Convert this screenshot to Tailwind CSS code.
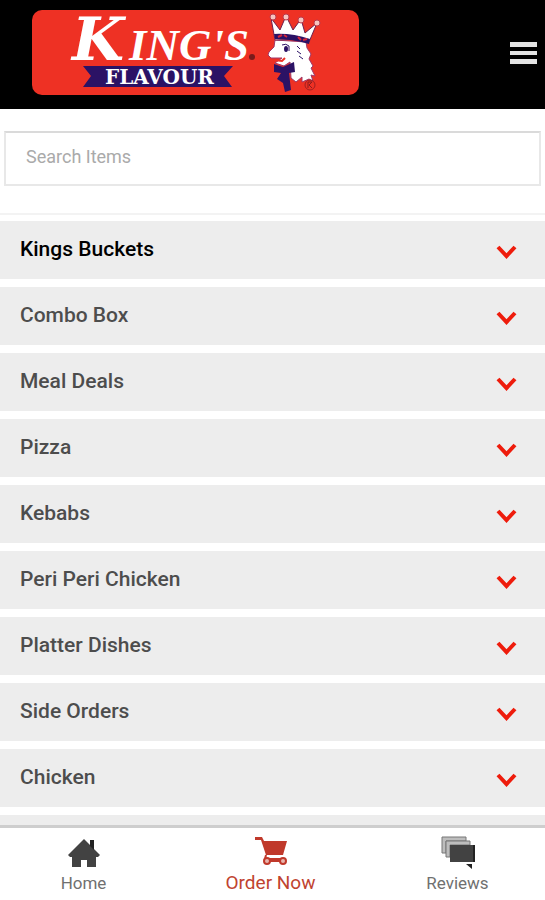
<!DOCTYPE html>
<html lang="en">
<head>
  <meta charset="UTF-8" />
  <meta name="viewport" content="width=device-width, initial-scale=1.0"/>
  <title>King's Flavour - Order Now</title>
  <script src="https://cdn.jsdelivr.net/npm/@tailwindcss/browser@4"></script>
</head>
<body class="flex flex-col h-screen overflow-hidden bg-white font-['Roboto',sans-serif]">
  <!-- Header -->
  <header class="shrink-0 flex justify-between items-start bg-black pt-[10px] pb-[14px] pl-8 pr-2">
    <a href="#" aria-label="King's Flavour">
      <svg class="w-[327px] h-[85px]" viewBox="0 0 327 85">
        <rect width="327" height="85" rx="10" fill="#ee3124" />
        <!-- Name -->
        <g fill="#fff" font-weight="bold" font-style="italic">
          <text x="40" y="50" font-size="60" font-family="DejaVu Serif, serif">K</text>
          <text x="97" y="50" font-size="45" font-family="Liberation Serif, serif">ING'S</text>
        </g>
        <circle cx="220" cy="47" r="3" fill="#7a1b1b" />
        <!-- Ribbon -->
        <path d="M51 56H201L192 66L200 77H51L59 66Z" fill="#2b1265" />
        <text x="73" y="74" font-size="20" fill="#fff" font-family="DejaVu Serif, serif" font-weight="bold">FLAVOUR</text>
        <!-- Rooster -->
        <path d="M243 30L242 37L237 42L236 45L239 48L250 48L243 53L252 56L258 52L259 68L264 72L270 67L270 72L277 69L281 71L279 65L283 66L279 58L281 56L277 49L279 44L275 38L274 32Z" fill="#fff" stroke="#a03a6a" stroke-width="1" />
        <path d="M243 30L239 8L248 20L254 6L261 20L269 9L273 23L285 13L277 32Q260 28 243 30Z" fill="#fff" stroke="#6d2150" stroke-width="1" />
        <g fill="#f6c4c0" stroke="#b83a4c" stroke-width="1">
          <circle cx="241" cy="7" r="3" />
          <circle cx="254" cy="7" r="3" />
          <circle cx="269" cy="10" r="3" />
          <circle cx="285" cy="13" r="3" />
        </g>
        <path d="M242 24Q260 23 278 29L277 34Q260 29 243 29Z" fill="#2b1265" />
        <path d="M246 27L250 25M252 25L255 27M266 27L269 30M271 30L275 29" stroke="#d5283c" stroke-width="2" />
        <ellipse cx="254" cy="39" rx="2" ry="3" fill="#2b1265" />
        <path d="M250 35Q254 33 257 36V41M265 36L268 39M265 41L269 44M267 46L271 49" fill="none" stroke="#2b1265" stroke-width="1" />
        <path d="M242 50L250 51L253 48" fill="none" stroke="#ee3124" stroke-width="2" />
        <path d="M242 54L251 57L262 52L263 62L257 63L259 80L253 82L251 73L245 69L249 63L242 62Z" fill="#2b1265" />
        <circle cx="278" cy="75" r="5" fill="none" stroke="#a02020" stroke-width="1" />
        <path d="M276 78V72H280L277 75L280 78" fill="none" stroke="#8c1c1c" stroke-width="1" />
      </svg>
    </a>
    <button type="button" aria-label="Menu" class="mt-8 flex flex-col gap-1">
      <span class="block w-[27px] h-[5px] bg-[#e4e4e4]"></span>
      <span class="block w-[27px] h-1 bg-[#e4e4e4]"></span>
      <span class="block w-[27px] h-[5px] bg-[#e4e4e4]"></span>
    </button>
  </header>

  <!-- Menu -->
  <main class="flex-1 min-h-0 overflow-y-auto [scrollbar-width:none]">
    <div class="px-1 pt-[22px] pb-[27px] border-b-2 border-[#f3f3f3]">
      <label for="search" class="sr-only">Search Items</label>
      <input type="text" id="search" placeholder="Search Items"
        class="block w-full h-[55px] px-5 pb-1 border-2 border-[#e8e8e8] border-t-[#dadada] text-lg text-[#444] placeholder:text-[#aaa] outline-none">
    </div>

    <ul class="flex flex-col gap-2 pt-[6px] text-[21px] font-medium text-[#4d4d4d]">
      <li>
        <button type="button" class="flex justify-between items-center w-full h-[58px] pl-5 pr-7 bg-[#ededed] text-black">
          Kings Buckets
          <svg class="w-[21px] h-4 mt-1" viewBox="0 0 21 16" fill="none" stroke="#ee1c0c" stroke-width="4"><path d="M2 3L10.500 12L19 3" /></svg>
        </button>
      </li>
      <li>
        <button type="button" class="flex justify-between items-center w-full h-[58px] pl-5 pr-7 bg-[#ededed]">
          Combo Box
          <svg class="w-[21px] h-4 mt-1" viewBox="0 0 21 16" fill="none" stroke="#ee1c0c" stroke-width="4"><path d="M2 3L10.500 12L19 3" /></svg>
        </button>
      </li>
      <li>
        <button type="button" class="flex justify-between items-center w-full h-[58px] pl-5 pr-7 bg-[#ededed]">
          Meal Deals
          <svg class="w-[21px] h-4 mt-1" viewBox="0 0 21 16" fill="none" stroke="#ee1c0c" stroke-width="4"><path d="M2 3L10.500 12L19 3" /></svg>
        </button>
      </li>
      <li>
        <button type="button" class="flex justify-between items-center w-full h-[58px] pl-5 pr-7 bg-[#ededed]">
          Pizza
          <svg class="w-[21px] h-4 mt-1" viewBox="0 0 21 16" fill="none" stroke="#ee1c0c" stroke-width="4"><path d="M2 3L10.500 12L19 3" /></svg>
        </button>
      </li>
      <li>
        <button type="button" class="flex justify-between items-center w-full h-[58px] pl-5 pr-7 bg-[#ededed]">
          Kebabs
          <svg class="w-[21px] h-4 mt-1" viewBox="0 0 21 16" fill="none" stroke="#ee1c0c" stroke-width="4"><path d="M2 3L10.500 12L19 3" /></svg>
        </button>
      </li>
      <li>
        <button type="button" class="flex justify-between items-center w-full h-[58px] pl-5 pr-7 bg-[#ededed]">
          Peri Peri Chicken
          <svg class="w-[21px] h-4 mt-1" viewBox="0 0 21 16" fill="none" stroke="#ee1c0c" stroke-width="4"><path d="M2 3L10.500 12L19 3" /></svg>
        </button>
      </li>
      <li>
        <button type="button" class="flex justify-between items-center w-full h-[58px] pl-5 pr-7 bg-[#ededed]">
          Platter Dishes
          <svg class="w-[21px] h-4 mt-1" viewBox="0 0 21 16" fill="none" stroke="#ee1c0c" stroke-width="4"><path d="M2 3L10.500 12L19 3" /></svg>
        </button>
      </li>
      <li>
        <button type="button" class="flex justify-between items-center w-full h-[58px] pl-5 pr-7 bg-[#ededed]">
          Side Orders
          <svg class="w-[21px] h-4 mt-1" viewBox="0 0 21 16" fill="none" stroke="#ee1c0c" stroke-width="4"><path d="M2 3L10.500 12L19 3" /></svg>
        </button>
      </li>
      <li>
        <button type="button" class="flex justify-between items-center w-full h-[58px] pl-5 pr-7 bg-[#ededed]">
          Chicken
          <svg class="w-[21px] h-4 mt-1" viewBox="0 0 21 16" fill="none" stroke="#ee1c0c" stroke-width="4"><path d="M2 3L10.500 12L19 3" /></svg>
        </button>
      </li>
      <li class="h-[58px] shrink-0 bg-[#ededed]"></li>
    </ul>
  </main>

  <!-- Bottom tabs -->
  <nav class="shrink-0 border-t-3 border-[#cecece] bg-white">
    <div class="-ml-[10px] -mr-[6px] grid grid-cols-3 pt-[7px] pb-[5px] text-[17px] leading-6 text-[#707070]">
      <a href="#" class="flex flex-col items-center">
        <svg class="w-8 h-9" viewBox="0 0 32 36" fill="#424242">
          <path d="M16 4L32 20L30 22H28V32H19V25H13V32H4V22H2L0 20Z" />
          <path d="M22 5H26V15L22 11Z" fill="#222" />
        </svg>
        Home
      </a>
      <a href="#" class="flex flex-col items-center text-[19px] text-[#c0432f]">
        <svg class="w-8 h-9" viewBox="0 0 32 36" fill="#c0392b">
          <path d="M0 2H7L9 6H32L28 20H11L6 5H0Z" />
          <path d="M11 20L10 24H28" fill="none" stroke="#c0392b" stroke-width="2" />
          <g fill="#e8b5ad" stroke="#c0392b" stroke-width="2">
            <circle cx="12" cy="26" r="3" />
            <circle cx="28" cy="26" r="3" />
          </g>
          <path d="M15 26H25" stroke="#c0392b" stroke-width="2" />
        </svg>
        Order Now
      </a>
      <a href="#" class="flex flex-col items-center">
        <svg class="w-[34px] h-9" viewBox="0 0 34 36">
          <g fill="#bdbdbd" stroke="#777" stroke-width="1">
            <path d="M1 18V2H25V6H5V18Z" />
            <path d="M5 22V6H29V10H9V22Z" />
          </g>
          <path d="M9 10H34V27H9Z" fill="#424242" />
          <path d="M32 10H34V27H32ZM25 29H31V34Z" fill="#222" />
        </svg>
        Reviews
      </a>
    </div>
  </nav>
</body>
</html>
